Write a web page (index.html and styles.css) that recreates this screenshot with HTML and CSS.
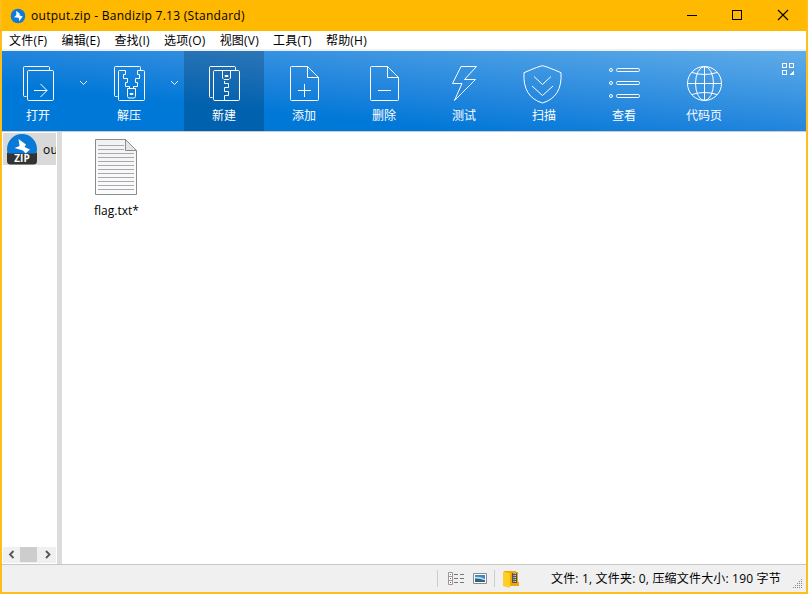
FILE: index.html
```html
<!DOCTYPE html>
<html lang="zh-CN">
<head>
<meta charset="utf-8">
<title>output.zip - Bandizip 7.13 (Standard)</title>
<link rel="stylesheet" href="styles.css">
</head>
<body>
<div class="window">
  <header class="titlebar">
    <svg class="logo" width="16" height="16" viewBox="0 0 16 16"><circle cx="8" cy="8" r="7.3" fill="#0e7bd8"/><path d="M6.200 2.800l3.600 3-.300 1.400 3.200 1.200-3.400 4.800-.600-3.400-4.700-.600 2.400-2.200z" fill="#fff"/></svg>
    <h1 class="title">output.zip - Bandizip 7.13 (Standard)</h1>
    <div class="controls">
      <svg width="46" height="31" shape-rendering="crispEdges"><path d="M19 15.500h10" stroke="#000"/></svg>
      <svg width="46" height="31" shape-rendering="crispEdges"><path d="M18.500 10.500h9v9h-9z" fill="none" stroke="#000"/></svg>
      <svg width="46" height="31"><path d="M18 10l10 10M28 10l-10 10" stroke="#000" stroke-width="1.1"/></svg>
    </div>
  </header>
  <nav class="menu">
    <span>文件(F)</span><span>编辑(E)</span><span>查找(I)</span><span>选项(O)</span><span>视图(V)</span><span>工具(T)</span><span>帮助(H)</span>
  </nav>
  <div class="toolbar">
    <button class="tool split">
      <svg class="icon" viewBox="0 0 40 40"><path d="M8.500 33.500h-2q-1 0-1-1V4.500q0-1 1-1h24q1 0 1 1v2.500"/><rect x="9.500" y="7.500" width="26" height="30" rx="1.200"/><path d="M16 27.500h13M22.500 21l6.500 6.500-6.500 6.500"/></svg>
      <span>打开</span>
    </button>
    <button class="drop"><svg width="9" height="6"><path d="M1 1l3.500 3.500L8 1"/></svg></button>
    <button class="tool split">
      <svg class="icon" viewBox="0 0 40 40"><path d="M8.500 33.500h-2q-1 0-1-1V4.500q0-1 1-1h24q1 0 1 1v2.500"/><path d="M16.500 7.500h-6q-1 0-1 1v28q0 1 1 1h24q1 0 1-1v-28q0-1-1-1h-6v4h2v4h-4v4h2v4h-4v2M16.500 7.500v4h-2v4h4v4h-2v4h4v2"/><path d="M18.500 25.500h8v8l-1 1.500h-6l-1-1.500zM21 30.500h3v1h-3z"/></svg>
      <span>解压</span>
    </button>
    <button class="drop"><svg width="9" height="6"><path d="M1 1l3.500 3.500L8 1"/></svg></button>
    <button class="tool active">
      <svg class="icon" viewBox="0 0 40 40"><path d="M8.500 34.500h-2q-1 0-1-1V4.500q0-1 1-1h24q1 0 1 1v2.500"/><rect x="9.500" y="7.500" width="26" height="30" rx="1.200"/><path d="M18.500 7.500v7.500l1.500 1.500h5l1.500-1.500v-7.500M21 12.500h3v1h-3zM20.500 18v2.500h4v4h-4v4h4v4h-4v5"/></svg>
      <span>新建</span>
    </button>
    <button class="tool">
      <svg class="icon" viewBox="0 0 40 40"><path d="M23.500 3.500h-16q-1 0-1 1v32q0 1 1 1h26q1 0 1-1v-22zv11h11M14 27.500h13M20.500 21v13"/></svg>
      <span>添加</span>
    </button>
    <button class="tool">
      <svg class="icon" viewBox="0 0 40 40"><path d="M23.500 3.500h-16q-1 0-1 1v32q0 1 1 1h26q1 0 1-1v-22zv11h11M14 27.500h13"/></svg>
      <span>删除</span>
    </button>
    <button class="tool">
      <svg class="icon" viewBox="0 0 40 40"><path d="M17 3.500h15.500L20.500 16.500h11L10.500 37.500l7.500-17H8.500z"/></svg>
      <span>测试</span>
    </button>
    <button class="tool">
      <svg class="icon shield" viewBox="0 0 40 40"><path d="M18.500 2.700Q22 3.200 37 9.700 38.500 34 18.500 40 -1.500 34 0 9.700 15 3.200 18.500 2.700z"/><path d="M10 13.500l8.500 8 8.500-8M8 23l10.500 9.500L29 23"/></svg>
      <span>扫描</span>
    </button>
    <button class="tool">
      <svg class="icon" viewBox="0 0 40 40"><circle cx="7" cy="7" r="1.500"/><circle cx="7" cy="20" r="1.500"/><circle cx="7" cy="33" r="1.500"/><rect x="12.500" y="5.500" width="23" height="3" rx="1.200"/><rect x="12.500" y="18.500" width="23" height="3" rx="1.200"/><rect x="12.500" y="31.500" width="23" height="3" rx="1.200"/></svg>
      <span>查看</span>
    </button>
    <button class="tool">
      <svg class="icon" viewBox="0 0 40 40"><circle cx="20.500" cy="20.500" r="17"/><ellipse cx="20.500" cy="20.500" rx="9" ry="17"/><path d="M20.500 3.500v34M3.500 20.500h34M8 9.500q12.500 4 25 0M8 31.500q12.500-4 25 0"/></svg>
      <span>代码页</span>
    </button>
    <svg class="layout" width="12" height="12" shape-rendering="crispEdges"><path d="M.5.500h4v4h-4zM7.500.500h4v4h-4zM.5 7.500h4v4h-4z" fill="none" stroke="#fff"/><path d="M12 7v5H7z" fill="#fff"/></svg>
  </div>
  <main class="content">
    <aside class="tree">
      <div class="node">
        <svg width="30" height="31" viewBox="0 0 30 31"><circle cx="15" cy="15" r="15" fill="#0879d7"/><path d="M0 18.500q2 1.500 4 1h22q2 .500 4-1V27q0 3.500-3.500 3.500h-23Q0 30.500 0 27z" fill="#333"/><path d="M11.500 5l7.500 5.500-1.500 2.500 5.500 2.500-4.500 4-2.500-3L7.500 14l5-2z" fill="#fff"/><text x="15" y="28" text-anchor="middle" class="zip">ZIP</text></svg>
        <span>output.zip</span>
      </div>
      <div class="scroll">
        <svg width="17" height="15"><path d="M10.500 4L7 7.500l3.500 3.500"/></svg><i></i><svg width="19" height="15"><path d="M9 4l3.500 3.500L9 11"/></svg>
      </div>
    </aside>
    <div class="splitter"></div>
    <section class="files">
      <figure class="file">
        <svg width="42" height="56" viewBox="0 0 42 56"><defs><linearGradient id="paper" x2="0" y2="1"><stop stop-color="#f2f2f3"/><stop offset="1" stop-color="#fcfcfc"/></linearGradient></defs><path d="M.5.500h30l11 11v44H.5z" fill="url(#paper)" stroke="#888c8e"/><path d="M30.500.500v11h11z" fill="#e4e5e6" stroke="#888c8e"/><path d="M3 6.500h26M3 10.500h26M3 14.500h36M3 18.500h36M3 22.500h36M3 26.500h36M3 30.500h36M3 34.500h36M3 38.500h36M3 42.500h36M3 46.500h36M3 50.500h36" stroke="#a8a9ac"/></svg>
        <figcaption>flag.txt*</figcaption>
      </figure>
    </section>
  </main>
  <footer class="status">
    <span class="sep"></span>
    <svg class="list" width="16" height="13"><path d="M.5.500h4v12h-4zM.5 4.500h4M.5 8.500h4" fill="#fff" stroke="#999"/><path d="M6 2.500h4M12 2.500h4M6 6.500h4M12 6.500h4M6 10.500h4M12 10.500h4" stroke="#777"/><path d="M2 2h1v1H2z" fill="#48a"/><path d="M2 6h1v1H2zM2 10h1v1H2z" fill="#c33"/></svg>
    <svg class="thumbs" width="14" height="11"><path d="M.5.500h13v10H.5z" fill="#fff" stroke="#8a8a8a"/><path d="M2 2h10v7H2z" fill="#3f86d2"/><path d="M2 4q4-1 10 2v1H2z" fill="#b9dcf0"/><path d="M2 5.500q4-.500 10 2V9H2z" fill="#2f6670"/></svg>
    <span class="sep"></span>
    <svg class="folder" width="17" height="18"><path d="M1 1h12v15H1z" fill="#f5a800"/><path d="M8 2h7v10h1v4H6z" fill="#eda900"/><path d="M9 3h5v10H9z" fill="#555"/><path d="M11 3v10" stroke="#eee" stroke-dasharray="1 1"/><path d="M12.500 3v10" stroke="#ccc" stroke-dasharray="1 1"/><path d="M0 1.500l7 1.700V18l-7-2z" fill="#ffce27"/></svg>
    <span class="summary">文件: 1, 文件夹: 0, 压缩文件大小: 190 字节</span>
    <svg class="grip" width="10" height="10" shape-rendering="crispEdges"><path d="M8 .5h1M6 2.500h1m1 0h1M4 4.500h1m1 0h1m1 0h1M2 6.500h1m1 0h1m1 0h1m1 0h1M0 8.500h1m1 0h1m1 0h1m1 0h1m1 0h1" stroke="#888"/></svg>
  </footer>
</div>
</body>
</html>
```
FILE: styles.css
```css
body {
  margin: 0;
}
.window {
  box-sizing: border-box;
  width: 808px;
  height: 594px;
  border: 2px solid #fdbd1a;
  border-top: 0;
  display: flex;
  flex-direction: column;
  font: 12px "Open Sans", "Noto Sans CJK SC", sans-serif;
  color: #000;
  background: #fff;
  overflow: hidden;
}
.titlebar {
  height: 31px;
  background: #ffb900;
  display: flex;
  align-items: center;
}
.logo {
  margin-left: 8px;
}
.title {
  font: 12px "Open Sans", sans-serif;
  letter-spacing: 0.28px;
  margin: 0 0 0 5px;
  flex: 1;
}
.controls {
  display: flex;
}
.menu {
  height: 18px;
  border-bottom: 2px solid #f0f0f0;
  display: flex;
  align-items: center;
  gap: 14.2px;
  padding-left: 7px;
  letter-spacing: 0.2px;
}
.toolbar {
  height: 80px;
  display: flex;
  background: linear-gradient(to bottom left, #60ace8 0, #2185dd 50%, #0078d7 72%);
  border-bottom: 1px solid #c8ccd0;
}
button {
  border: 0;
  padding: 0;
  background: none;
  color: #fff;
  font: inherit;
}
.tool {
  width: 80px;
  display: flex;
  flex-direction: column;
  align-items: center;
  gap: 3px;
  padding-top: 12px;
}
.split {
  width: 72px;
}
.drop {
  width: 19px;
  padding-bottom: 19px;
}
.active {
  background: #00000030;
}
.icon {
  width: 40px;
  height: 40px;
  flex: none;
  fill: none;
  stroke: #fff;
}
.shield {
  overflow: visible;
}
.drop svg {
  fill: none;
  stroke: #fff;
}
.layout {
  margin: 12px 0 0 38px;
}
.content {
  flex: 1;
  display: flex;
  min-height: 0;
}
.tree {
  width: 53px;
  padding: 1px;
  display: flex;
  flex-direction: column;
  justify-content: space-between;
}
.node {
  display: flex;
  align-items: center;
  gap: 6px;
  overflow: hidden;
  background: #d9d9d9;
  height: 32px;
  padding-left: 4px;
}
.node svg {
  flex: none;
}
.node span {
  letter-spacing: 0.2px;
}
.scroll {
  display: flex;
  height: 16px;
  background: #f0f0f0;
}
.scroll i {
  width: 17px;
  height: 15px;
  background: #cdcdcd;
}
.scroll svg {
  fill: none;
  stroke: #555;
  stroke-width: 1.8;
}
.zip {
  font: bold 10px "Open Sans", sans-serif;
  fill: #fff;
}
.splitter {
  width: 5px;
  background: #dcdcdc;
}
.files {
  padding: 7px 0 0 33px;
}
.file {
  margin: 0;
  width: 42px;
}
.file svg {
  display: block;
}
figcaption {
  margin: 7px 0 0 -1px;
}
.status {
  height: 27px;
  border-top: 1px solid #c8c8c8;
  background: #f0f0f0;
  display: flex;
  align-items: center;
  justify-content: flex-end;
}
.sep {
  width: 1px;
  height: 17px;
  background: #ccc;
}
.list {
  margin: 0 9px 0 10px;
}
.thumbs {
  margin-right: 7px;
}
.folder {
  margin: 0 31px 0 8px;
}
.summary {
  width: 230px;
  margin-bottom: 1px;
  white-space: nowrap;
  letter-spacing: 0.18px;
}
.grip {
  margin: 10px 3px 0 12px;
}
```
